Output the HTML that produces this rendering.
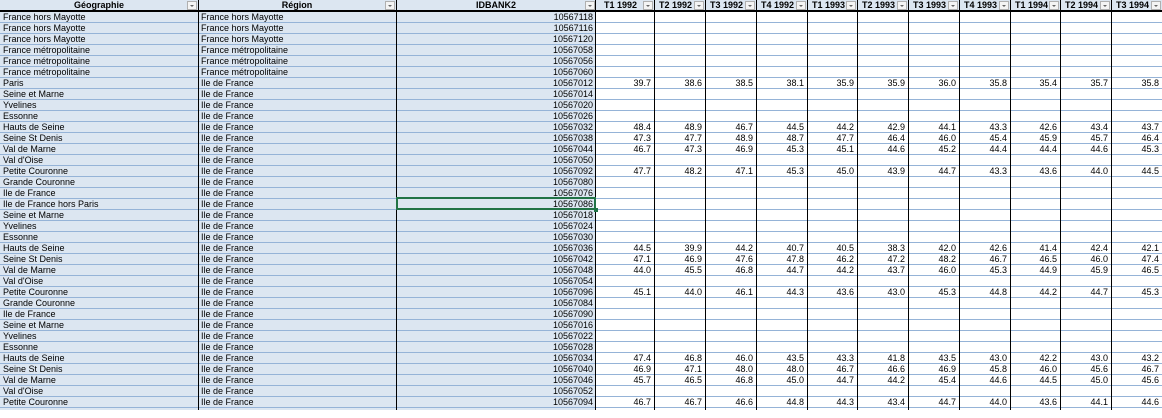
<!DOCTYPE html>
<html><head><meta charset="utf-8">
<style>
*{margin:0;padding:0;box-sizing:border-box}
body{width:1162px;height:410px;overflow:hidden;background:#fff;position:relative;font-family:"Liberation Sans",sans-serif;font-size:9px;color:#000}
.bg{position:absolute;left:0;top:0;width:596px;height:410px;background:#dce6f1}
.hd{position:absolute;left:0;top:0;width:1162px;height:11px;background:#dce6f1;border-bottom:1px solid #000}
.r{position:absolute;left:0;width:1162px;height:11px;border-top:1px solid #95b3d7}
.r span,.hd span{position:absolute;top:0;height:10px;line-height:10px;white-space:nowrap;overflow:hidden}
.r span:nth-child(1){left:3px;width:194px}
.r span:nth-child(2){left:201px;width:194px}
.r span:nth-child(3){left:398px;width:195px;text-align:right}
.r span:nth-child(n+4){width:48px;text-align:right}
.r span:nth-child(4){left:603px}
.r span:nth-child(5){left:654px}
.r span:nth-child(6){left:705px}
.r span:nth-child(7){left:756px}
.r span:nth-child(8){left:806px}
.r span:nth-child(9){left:857px}
.r span:nth-child(10){left:908px}
.r span:nth-child(11){left:959px}
.r span:nth-child(12){left:1009px}
.r span:nth-child(13){left:1060px}
.r span:nth-child(14){left:1111px}
.hd span{font-weight:bold;top:0}
.v{position:absolute;top:0;width:1px;height:410px;background:#000}
.dd{position:absolute;top:1px;width:10px;height:9px;background:#f4f4f4;border:1px solid #b0b0b0}
.dd:after{content:"";position:absolute;left:2px;top:3px;border-left:2px solid transparent;border-right:2px solid transparent;border-top:2px solid #666}
.sel{position:absolute;left:396px;top:197px;width:200px;height:13px;border:2px solid #217346}
.h{position:absolute;left:594px;top:208px;width:4px;height:4px;background:#217346}
</style></head><body>
<div class="bg"></div>
<div class="hd">
<span style="left:0;width:198px;text-align:center">Géographie</span>
<span style="left:198px;width:198px;text-align:center">Région</span>
<span style="left:396px;width:200px;text-align:center">IDBANK2</span>
<span style="left:604px;width:40px">T1 1992</span>
<span style="left:659px;width:34px">T2 1992</span>
<span style="left:710px;width:34px">T3 1992</span>
<span style="left:761px;width:34px">T4 1992</span>
<span style="left:812px;width:34px">T1 1993</span>
<span style="left:862px;width:34px">T2 1993</span>
<span style="left:913px;width:34px">T3 1993</span>
<span style="left:964px;width:34px">T4 1993</span>
<span style="left:1015px;width:34px">T1 1994</span>
<span style="left:1065px;width:34px">T2 1994</span>
<span style="left:1116px;width:34px">T3 1994</span>
</div>
<div class="dd" style="left:187px"></div><div class="dd" style="left:385px"></div><div class="dd" style="left:585px"></div>
<div class="dd" style="left:643px"></div><div class="dd" style="left:694px"></div><div class="dd" style="left:745px"></div><div class="dd" style="left:796px"></div><div class="dd" style="left:846px"></div><div class="dd" style="left:897px"></div><div class="dd" style="left:948px"></div><div class="dd" style="left:999px"></div><div class="dd" style="left:1049px"></div><div class="dd" style="left:1100px"></div><div class="dd" style="left:1151px"></div>

<div class="r" style="top:11px;border-top-color:#000"><span>France hors Mayotte</span><span>France hors Mayotte</span><span>10567118</span></div>
<div class="r" style="top:22px"><span>France hors Mayotte</span><span>France hors Mayotte</span><span>10567116</span></div>
<div class="r" style="top:33px"><span>France hors Mayotte</span><span>France hors Mayotte</span><span>10567120</span></div>
<div class="r" style="top:44px"><span>France métropolitaine</span><span>France métropolitaine</span><span>10567058</span></div>
<div class="r" style="top:55px"><span>France métropolitaine</span><span>France métropolitaine</span><span>10567056</span></div>
<div class="r" style="top:66px"><span>France métropolitaine</span><span>France métropolitaine</span><span>10567060</span></div>
<div class="r" style="top:77px"><span>Paris</span><span>Ile de France</span><span>10567012</span><span>39.7</span><span>38.6</span><span>38.5</span><span>38.1</span><span>35.9</span><span>35.9</span><span>36.0</span><span>35.8</span><span>35.4</span><span>35.7</span><span>35.8</span></div>
<div class="r" style="top:88px"><span>Seine et Marne</span><span>Ile de France</span><span>10567014</span></div>
<div class="r" style="top:99px"><span>Yvelines</span><span>Ile de France</span><span>10567020</span></div>
<div class="r" style="top:110px"><span>Essonne</span><span>Ile de France</span><span>10567026</span></div>
<div class="r" style="top:121px"><span>Hauts de Seine</span><span>Ile de France</span><span>10567032</span><span>48.4</span><span>48.9</span><span>46.7</span><span>44.5</span><span>44.2</span><span>42.9</span><span>44.1</span><span>43.3</span><span>42.6</span><span>43.4</span><span>43.7</span></div>
<div class="r" style="top:132px"><span>Seine St Denis</span><span>Ile de France</span><span>10567038</span><span>47.3</span><span>47.7</span><span>48.9</span><span>48.7</span><span>47.7</span><span>46.4</span><span>46.0</span><span>45.4</span><span>45.9</span><span>45.7</span><span>46.4</span></div>
<div class="r" style="top:143px"><span>Val de Marne</span><span>Ile de France</span><span>10567044</span><span>46.7</span><span>47.3</span><span>46.9</span><span>45.3</span><span>45.1</span><span>44.6</span><span>45.2</span><span>44.4</span><span>44.4</span><span>44.6</span><span>45.3</span></div>
<div class="r" style="top:154px"><span>Val d'Oise</span><span>Ile de France</span><span>10567050</span></div>
<div class="r" style="top:165px"><span>Petite Couronne</span><span>Ile de France</span><span>10567092</span><span>47.7</span><span>48.2</span><span>47.1</span><span>45.3</span><span>45.0</span><span>43.9</span><span>44.7</span><span>43.3</span><span>43.6</span><span>44.0</span><span>44.5</span></div>
<div class="r" style="top:176px"><span>Grande Couronne</span><span>Ile de France</span><span>10567080</span></div>
<div class="r" style="top:187px"><span>Ile de France</span><span>Ile de France</span><span>10567076</span></div>
<div class="r" style="top:198px"><span>Ile de France hors Paris</span><span>Ile de France</span><span>10567086</span></div>
<div class="r" style="top:209px"><span>Seine et Marne</span><span>Ile de France</span><span>10567018</span></div>
<div class="r" style="top:220px"><span>Yvelines</span><span>Ile de France</span><span>10567024</span></div>
<div class="r" style="top:231px"><span>Essonne</span><span>Ile de France</span><span>10567030</span></div>
<div class="r" style="top:242px"><span>Hauts de Seine</span><span>Ile de France</span><span>10567036</span><span>44.5</span><span>39.9</span><span>44.2</span><span>40.7</span><span>40.5</span><span>38.3</span><span>42.0</span><span>42.6</span><span>41.4</span><span>42.4</span><span>42.1</span></div>
<div class="r" style="top:253px"><span>Seine St Denis</span><span>Ile de France</span><span>10567042</span><span>47.1</span><span>46.9</span><span>47.6</span><span>47.8</span><span>46.2</span><span>47.2</span><span>48.2</span><span>46.7</span><span>46.5</span><span>46.0</span><span>47.4</span></div>
<div class="r" style="top:264px"><span>Val de Marne</span><span>Ile de France</span><span>10567048</span><span>44.0</span><span>45.5</span><span>46.8</span><span>44.7</span><span>44.2</span><span>43.7</span><span>46.0</span><span>45.3</span><span>44.9</span><span>45.9</span><span>46.5</span></div>
<div class="r" style="top:275px"><span>Val d'Oise</span><span>Ile de France</span><span>10567054</span></div>
<div class="r" style="top:286px"><span>Petite Couronne</span><span>Ile de France</span><span>10567096</span><span>45.1</span><span>44.0</span><span>46.1</span><span>44.3</span><span>43.6</span><span>43.0</span><span>45.3</span><span>44.8</span><span>44.2</span><span>44.7</span><span>45.3</span></div>
<div class="r" style="top:297px"><span>Grande Couronne</span><span>Ile de France</span><span>10567084</span></div>
<div class="r" style="top:308px"><span>Ile de France</span><span>Ile de France</span><span>10567090</span></div>
<div class="r" style="top:319px"><span>Seine et Marne</span><span>Ile de France</span><span>10567016</span></div>
<div class="r" style="top:330px"><span>Yvelines</span><span>Ile de France</span><span>10567022</span></div>
<div class="r" style="top:341px"><span>Essonne</span><span>Ile de France</span><span>10567028</span></div>
<div class="r" style="top:352px"><span>Hauts de Seine</span><span>Ile de France</span><span>10567034</span><span>47.4</span><span>46.8</span><span>46.0</span><span>43.5</span><span>43.3</span><span>41.8</span><span>43.5</span><span>43.0</span><span>42.2</span><span>43.0</span><span>43.2</span></div>
<div class="r" style="top:363px"><span>Seine St Denis</span><span>Ile de France</span><span>10567040</span><span>46.9</span><span>47.1</span><span>48.0</span><span>48.0</span><span>46.7</span><span>46.6</span><span>46.9</span><span>45.8</span><span>46.0</span><span>45.6</span><span>46.7</span></div>
<div class="r" style="top:374px"><span>Val de Marne</span><span>Ile de France</span><span>10567046</span><span>45.7</span><span>46.5</span><span>46.8</span><span>45.0</span><span>44.7</span><span>44.2</span><span>45.4</span><span>44.6</span><span>44.5</span><span>45.0</span><span>45.6</span></div>
<div class="r" style="top:385px"><span>Val d'Oise</span><span>Ile de France</span><span>10567052</span></div>
<div class="r" style="top:396px"><span>Petite Couronne</span><span>Ile de France</span><span>10567094</span><span>46.7</span><span>46.7</span><span>46.6</span><span>44.8</span><span>44.3</span><span>43.4</span><span>44.7</span><span>44.0</span><span>43.6</span><span>44.1</span><span>44.6</span></div>
<div class="r" style="top:407px"></div>

<div class="v" style="left:198px"></div><div class="v" style="left:396px"></div><div class="v" style="left:595px"></div>
<div class="v" style="left:654px"></div><div class="v" style="left:705px"></div><div class="v" style="left:756px"></div><div class="v" style="left:807px"></div><div class="v" style="left:857px"></div><div class="v" style="left:908px"></div><div class="v" style="left:959px"></div><div class="v" style="left:1010px"></div><div class="v" style="left:1060px"></div><div class="v" style="left:1111px"></div>
<div class="sel"></div><div class="h"></div>
</body></html>
